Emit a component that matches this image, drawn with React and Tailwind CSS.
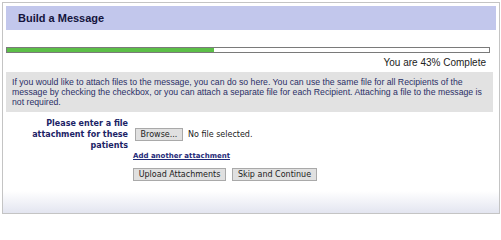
import React from "react";

// Paso de adjuntos en el asistente "Build a Message"
const pasos = { porcentaje: 43 };

const Boton = ({ children, className = "" }) => (
  <button
    type="button"
    className={`h-[13px] whitespace-nowrap border border-[#a9a9a9] bg-[#e0e0e0] text-[8px] leading-[11px] text-[#222] ${className}`}
    style={{ fontFamily: '"DejaVu Sans", Verdana, sans-serif' }}
  >
    {children}
  </button>
);

export default function App() {
  return (
    <div className="h-[216px] w-[501px] bg-white pl-[2px] pt-[2px]">
      <div
        className="flex h-[212px] w-[498px] flex-col border border-[#c4c4c4] px-[3px] pt-[3px]"
        style={{ fontFamily: '"Liberation Sans", Arial, sans-serif' }}
      >
        {/* Encabezado */}
        <div className="flex h-[24px] w-[490px] items-center bg-[#c2c7ec] pl-[12px]">
          <h2 className="text-[11px] font-bold text-[#14143c]">Build a Message</h2>
        </div>

        {/* Barra de progreso */}
        <div className="mt-[17px] h-[6px] w-[484px] border border-[#7a7a7a] bg-white">
          <div
            className="h-full bg-[#5cbf48]"
            style={{ width: `${pasos.porcentaje}%` }}
          />
        </div>
        <p className="mt-[4px] w-[480px] text-right text-[10px] leading-[12px] text-[#222]">
          You are {pasos.porcentaje}% Complete
        </p>

        {/* Instrucciones */}
        <div className="mt-[3px] h-[40px] w-[487px] whitespace-nowrap bg-[#e2e2e2] px-[6px] py-[5px] text-[8.7px] leading-[10px] text-[#2a2f66]">
          If you would like to attach files to the message, you can do so here. You can use the same file for all Recipients of the
          <br />
          message by checking the checkbox, or you can attach a separate file for each Recipient. Attaching a file to the message is
          <br />
          not required.
        </div>

        {/* Formulario de adjuntos */}
        <div
          className="mt-[6px] grid grid-cols-[122px_1fr] gap-x-[5px] text-[#1c2466]"
          style={{ fontFamily: '"DejaVu Sans", Verdana, sans-serif' }}
        >
          <label className="text-right text-[8px] font-bold leading-[11px]">
            Please enter a file attachment for these patients
          </label>
          <div className="flex items-center gap-[5px]">
            <Boton className="ml-[2px] w-[48px]">Browse...</Boton>
            <span className="text-[8px] text-[#222]">No file selected.</span>
          </div>
          <div />
          <a
            href="#"
            className="mt-[1px] text-[7px] font-bold leading-[9px] text-[#1f2a78] underline"
          >
            Add another attachment
          </a>
          <div />
          <div className="mt-[7px] flex gap-[6px]">
            <Boton className="w-[93px]">Upload Attachments</Boton>
            <Boton className="w-[85px]">Skip and Continue</Boton>
          </div>
        </div>

        <div className="mx-[-3px] mt-auto h-[22px] bg-linear-to-b from-white to-[#e3e5f0]" />
      </div>
    </div>
  );
}
